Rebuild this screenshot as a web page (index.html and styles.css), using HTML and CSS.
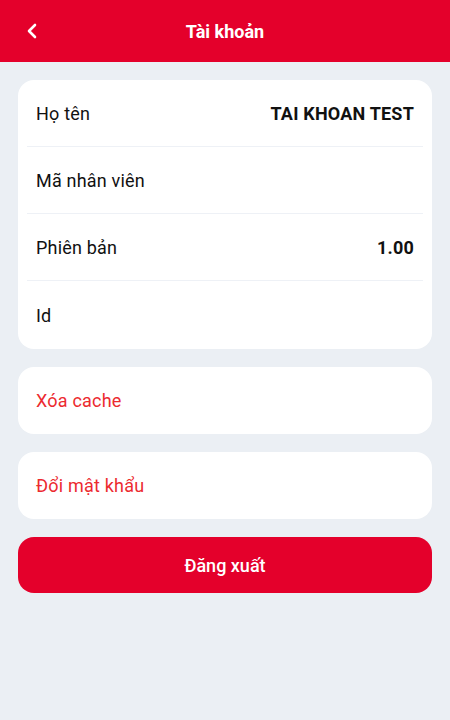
FILE: index.html
```html
<!DOCTYPE html>
<html lang="vi">
<head>
  <meta charset="UTF-8">
  <meta name="viewport" content="width=device-width, initial-scale=1.0">
  <title>Tài khoản</title>
  <link rel="stylesheet" href="styles.css">
</head>
<body>
  <header class="topbar">
    <button class="back-btn" aria-label="Quay lại">
      <svg width="12" height="16" viewBox="0 0 12 16"><path d="M9 2 L3 8 L9 14" fill="none" stroke="#fff" stroke-width="2.6" stroke-linecap="round" stroke-linejoin="round"/></svg>
    </button>
    <h1 class="title">Tài khoản</h1>
  </header>

  <main class="content">
    <section class="card info">
      <div class="row">
        <span class="label">Họ tên</span>
        <span class="value">TAI KHOAN TEST</span>
      </div>
      <div class="row">
        <span class="label">Mã nhân viên</span>
        <span class="value"></span>
      </div>
      <div class="row">
        <span class="label">Phiên bản</span>
        <span class="value">1.00</span>
      </div>
      <div class="row">
        <span class="label">Id</span>
        <span class="value"></span>
      </div>
    </section>

    <section class="card action">Xóa cache</section>
    <section class="card action">Đổi mật khẩu</section>

    <button class="logout-btn">Đăng xuất</button>
  </main>
</body>
</html>
```

FILE: styles.css
```css
body {
  margin: 0;
  font-family: Roboto, "Noto Sans", Arial, sans-serif;
  background-color: #ebeff4;
  color: #111;
}
.topbar {
  height: 62px;
  background-color: #e4002b;
  display: flex;
  align-items: center;
  justify-content: center;
  position: relative;
}
.back-btn {
  position: absolute;
  left: 18px;
  top: 15px;
  width: 28px;
  height: 32px;
  padding: 0;
  border: none;
  background: none;
  display: flex;
  align-items: center;
  justify-content: center;
}
.title {
  margin: 0;
  color: #fff;
  font-size: 18px;
  font-weight: 700;
}
.content {
  padding: 18px;
  display: flex;
  flex-direction: column;
  gap: 18px;
}
.card {
  background: #fff;
  border-radius: 16px;
}
.info {
  padding: 0 9px;
}
.row {
  box-sizing: border-box;
  height: 67px;
  padding: 0 9px;
  display: flex;
  align-items: center;
  justify-content: space-between;
  font-size: 18px;
  letter-spacing: 0.2px;
  border-bottom: 1px solid #eef1f6;
}
.row:last-child {
  height: 68px;
  border-bottom: none;
}
.value {
  font-weight: 700;
}
.action {
  height: 67px;
  padding: 0 18px;
  display: flex;
  align-items: center;
  font-size: 18px;
  letter-spacing: 0.2px;
  color: #ec2a2f;
}
.logout-btn {
  height: 56px;
  border: none;
  border-radius: 16px;
  background-color: #e4002b;
  color: #fff;
  font-family: inherit;
  font-size: 18px;
  font-weight: 500;
}
```
